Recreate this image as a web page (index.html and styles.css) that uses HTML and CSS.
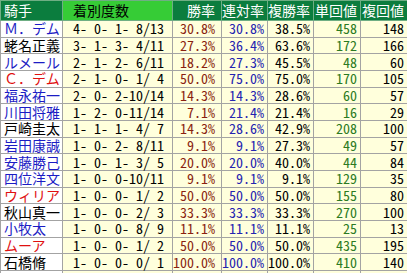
FILE: index.html
```html
<!DOCTYPE html>
<html lang="ja">
<head>
<meta charset="utf-8">
<title>騎手成績</title>
<link rel="stylesheet" href="styles.css">
</head>
<body>
<table class="stats">
  <colgroup>
    <col class="c-name"><col class="c-rec"><col class="c-win"><col class="c-ren"><col class="c-fuku"><col class="c-tan"><col class="c-fkv">
  </colgroup>
  <thead>
    <tr>
      <th class="h-dark name">騎手</th>
      <th class="h-light rec">着別度数</th>
      <th class="h-dark num win">勝率</th>
      <th class="h-dark num">連対率</th>
      <th class="h-dark num">複勝率</th>
      <th class="h-dark num">単回値</th>
      <th class="h-dark num">複回値</th>
    </tr>
  </thead>
  <tbody>
    <tr><td class="name blue">Ｍ．デム</td><td class="rec">4- 0- 1- 8/13</td><td class="num win red">30.8%</td><td class="num navy">30.8%</td><td class="num">38.5%</td><td class="num green">458</td><td class="num">148</td></tr>
    <tr><td class="name">蛯名正義</td><td class="rec">3- 1- 3- 4/11</td><td class="num win red">27.3%</td><td class="num navy">36.4%</td><td class="num">63.6%</td><td class="num green">172</td><td class="num">166</td></tr>
    <tr><td class="name blue">ルメール</td><td class="rec">2- 1- 2- 6/11</td><td class="num win red">18.2%</td><td class="num navy">27.3%</td><td class="num">45.5%</td><td class="num green">48</td><td class="num">60</td></tr>
    <tr><td class="name scarlet">Ｃ．デム</td><td class="rec">2- 1- 0- 1/ 4</td><td class="num win red">50.0%</td><td class="num navy">75.0%</td><td class="num">75.0%</td><td class="num green">170</td><td class="num">105</td></tr>
    <tr><td class="name blue">福永祐一</td><td class="rec">2- 0- 2-10/14</td><td class="num win red">14.3%</td><td class="num navy">14.3%</td><td class="num">28.6%</td><td class="num green">60</td><td class="num">57</td></tr>
    <tr><td class="name blue">川田将雅</td><td class="rec">1- 2- 0-11/14</td><td class="num win red">7.1%</td><td class="num navy">21.4%</td><td class="num">21.4%</td><td class="num green">16</td><td class="num">29</td></tr>
    <tr><td class="name">戸崎圭太</td><td class="rec">1- 1- 1- 4/ 7</td><td class="num win red">14.3%</td><td class="num navy">28.6%</td><td class="num">42.9%</td><td class="num green">208</td><td class="num">100</td></tr>
    <tr><td class="name blue">岩田康誠</td><td class="rec">1- 0- 2- 8/11</td><td class="num win red">9.1%</td><td class="num navy">9.1%</td><td class="num">27.3%</td><td class="num green">49</td><td class="num">57</td></tr>
    <tr><td class="name blue">安藤勝己</td><td class="rec">1- 0- 1- 3/ 5</td><td class="num win red">20.0%</td><td class="num navy">20.0%</td><td class="num">40.0%</td><td class="num green">44</td><td class="num">84</td></tr>
    <tr><td class="name blue">四位洋文</td><td class="rec">1- 0- 0-10/11</td><td class="num win red">9.1%</td><td class="num navy">9.1%</td><td class="num">9.1%</td><td class="num green">129</td><td class="num">35</td></tr>
    <tr><td class="name scarlet">ウィリア</td><td class="rec">1- 0- 0- 1/ 2</td><td class="num win red">50.0%</td><td class="num navy">50.0%</td><td class="num">50.0%</td><td class="num green">155</td><td class="num">80</td></tr>
    <tr><td class="name">秋山真一</td><td class="rec">1- 0- 0- 2/ 3</td><td class="num win red">33.3%</td><td class="num navy">33.3%</td><td class="num">33.3%</td><td class="num green">270</td><td class="num">100</td></tr>
    <tr><td class="name blue">小牧太</td><td class="rec">1- 0- 0- 8/ 9</td><td class="num win red">11.1%</td><td class="num navy">11.1%</td><td class="num">11.1%</td><td class="num green">25</td><td class="num">13</td></tr>
    <tr><td class="name scarlet">ムーア</td><td class="rec">1- 0- 0- 1/ 2</td><td class="num win red">50.0%</td><td class="num navy">50.0%</td><td class="num">50.0%</td><td class="num green">435</td><td class="num">195</td></tr>
    <tr><td class="name">石橋脩</td><td class="rec">1- 0- 0- 0/ 1</td><td class="num win red">100.0%</td><td class="num navy">100.0%</td><td class="num">100.0%</td><td class="num green">410</td><td class="num">140</td></tr>
    <tr class="cut"><td class="name"></td><td class="rec"></td><td class="num win"></td><td class="num"></td><td class="num"></td><td class="num"></td><td class="num"></td></tr>
  </tbody>
</table>
</body>
</html>
```

FILE: styles.css
```css
html, body {
  margin: 0;
  padding: 0;
  background: #ffffff;
  overflow: hidden;
}

.stats {
  border-collapse: collapse;
  table-layout: fixed;
  width: 407px;
  font-family: "Noto Sans CJK JP", "Noto Sans", sans-serif;
  font-size: 14px;
  line-height: 15px;
  color: #000000;
}

.c-name { width: 62px; }
.c-rec { width: 110px; }
.c-win { width: 49px; }
.c-ren { width: 46px; }
.c-fuku { width: 46px; }
.c-tan { width: 47px; }
.c-fkv { width: 47px; }

.stats th,
.stats td {
  border: 1px solid #a3a3a3;
  padding: 0 3px 0 0;
  white-space: pre;
  font-weight: normal;
}

.stats thead tr { height: 20px; }
.stats tbody tr { height: 16.67px; }

.stats th {
  text-align: left;
  border-color: #6fae84;
}

.h-dark {
  background: #0b7d3e;
  color: #ffffff;
}

.h-light {
  background: #36cc36;
  color: #000000;
}

.stats .name {
  padding: 0 0 0 3px;
}

.stats .num {
  text-align: right;
}

.stats td.num,
.stats td.rec {
  font-feature-settings: "hwid" 1;
}

.stats .rec {
  padding: 0 0 0 10px;
}

.stats .win {
  padding-right: 6px;
}

.stats td {
  background: #ffffdc;
}

.stats td.name {
  background: #ffffff;
}

.blue { color: #1c1cc4; }
.scarlet { color: #e01010; }
.red { color: #8a1f10; }
.navy { color: #2424b0; }
.green { color: #2b7a22; }
```
